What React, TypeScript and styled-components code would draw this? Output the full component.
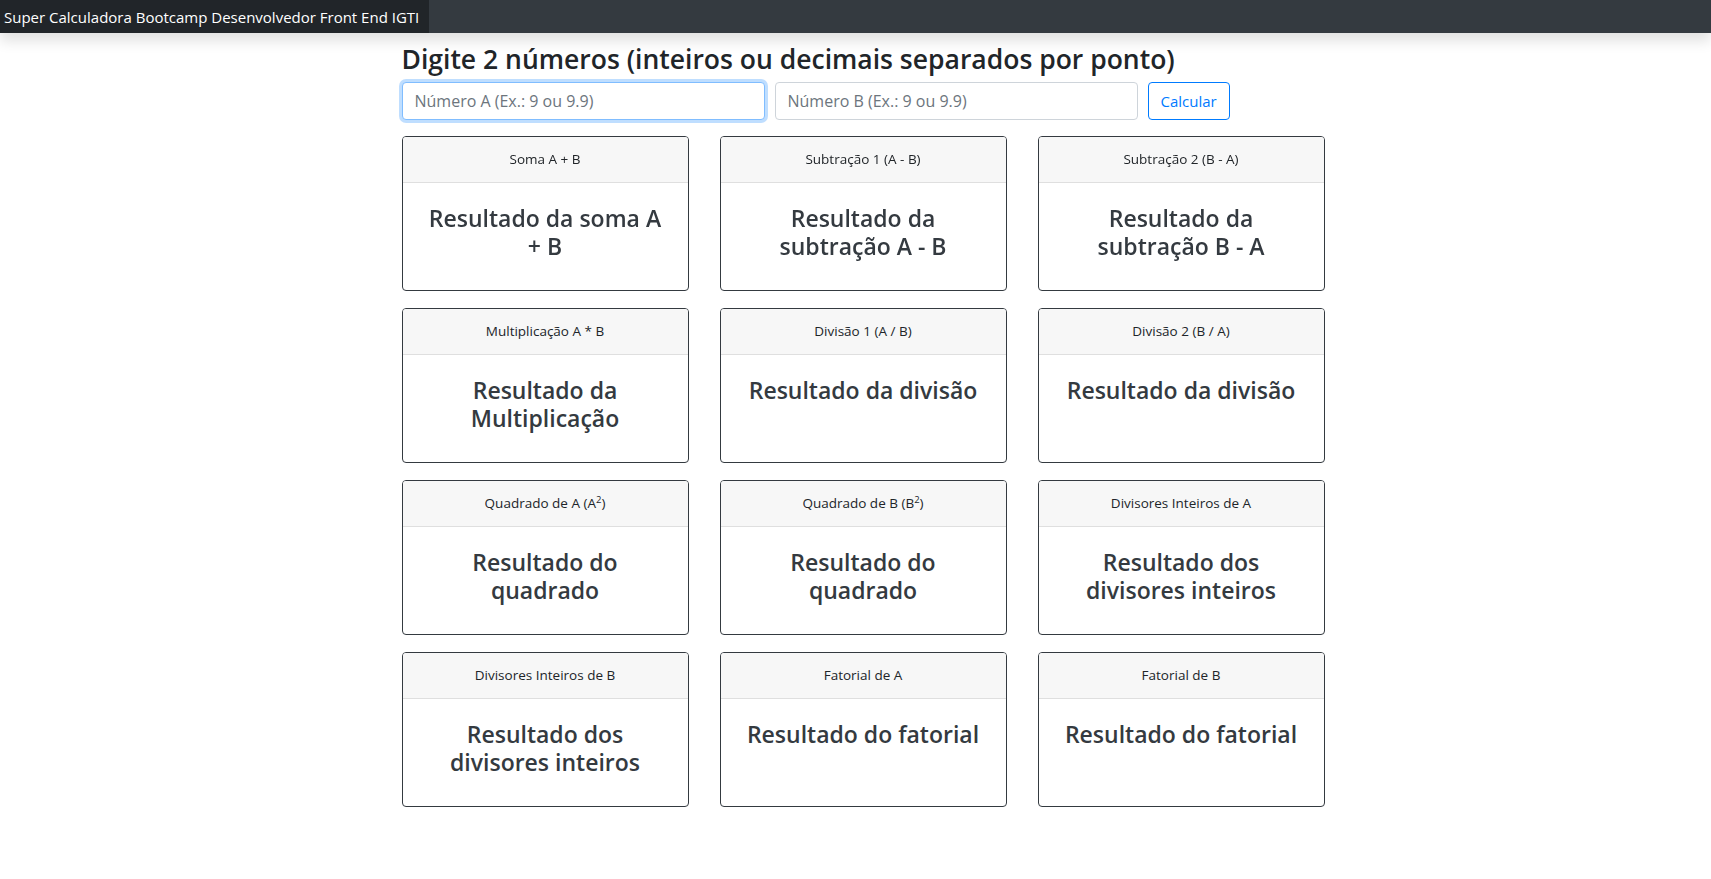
import React from "react";
import styled, { createGlobalStyle } from "styled-components";

const Global = createGlobalStyle`
  * { box-sizing: border-box; }
  body {
    margin: 0;
    background: #fff;
    color: #212529;
    font-family: "Open Sans", "Noto Sans", sans-serif;
  }
`;

const NavBar = styled.nav`
  height: 33px;
  background: #343a40;
  display: flex;
  align-items: stretch;
  box-shadow: 0 8px 14px rgba(0, 0, 0, 0.12);
`;

const Brand = styled.div`
  background: #212529;
  color: #fff;
  font-size: 15px;
  display: flex;
  align-items: center;
  padding: 0 10px 0 4px;
  white-space: nowrap;
`;

const Container = styled.main`
  width: 938px;
  margin: 0 auto;
  padding: 11px 0 24px 15px;
`;

const Title = styled.h3`
  margin: 0 0 6px;
  font-size: 26.5px;
  font-weight: 600;
  line-height: 1.2;
  color: #212529;
`;

const Form = styled.div`
  display: flex;
  align-items: center;
  gap: 10px;
  margin-bottom: 16px;
`;

const Input = styled.input`
  width: 363px;
  height: 38px;
  padding: 6px 12px;
  font-family: inherit;
  font-size: 16px;
  color: #495057;
  border: 1px solid #ced4da;
  border-radius: 4px;
  outline: none;
  &::placeholder { color: #6c757d; }
  &:focus {
    border-color: #80bdff;
    box-shadow: 0 0 0 3px rgba(0, 123, 255, 0.25);
  }
`;

const Button = styled.button`
  height: 38px;
  padding: 0 12px;
  font-family: inherit;
  font-size: 15px;
  color: #007bff;
  background: #fff;
  border: 1px solid #007bff;
  border-radius: 4px;
  cursor: pointer;
`;

const Grid = styled.div`
  display: grid;
  grid-template-columns: repeat(3, 287px);
  column-gap: 31px;
  row-gap: 17px;
`;

const Card = styled.section`
  height: 155px;
  border: 1px solid #343a40;
  border-radius: 4px;
  display: flex;
  flex-direction: column;
  overflow: hidden;
`;

const CardHeader = styled.header`
  background: #f7f7f7;
  border-bottom: 1px solid #dfdfdf;
  padding: 12px 16px;
  font-size: 13.5px;
  line-height: 21px;
  text-align: center;
  color: #212529;
  sup { font-size: 9.5px; line-height: 0; }
`;

const CardBody = styled.div`
  padding: 21px 20px 20px;
  text-align: center;
  font-size: 23px;
  font-weight: 600;
  line-height: 28px;
  color: #343a40;
`;

type Item = { title: React.ReactNode; body: string };

const items: Item[] = [
  { title: "Soma A + B", body: "Resultado da soma A + B" },
  { title: "Subtração 1 (A - B)", body: "Resultado da subtração A - B" },
  { title: "Subtração 2 (B - A)", body: "Resultado da subtração B - A" },
  { title: "Multiplicação A * B", body: "Resultado da Multiplicação" },
  { title: "Divisão 1 (A / B)", body: "Resultado da divisão" },
  { title: "Divisão 2 (B / A)", body: "Resultado da divisão" },
  { title: <>Quadrado de A (A<sup>2</sup>)</>, body: "Resultado do quadrado" },
  { title: <>Quadrado de B (B<sup>2</sup>)</>, body: "Resultado do quadrado" },
  { title: "Divisores Inteiros de A", body: "Resultado dos divisores inteiros" },
  { title: "Divisores Inteiros de B", body: "Resultado dos divisores inteiros" },
  { title: "Fatorial de A", body: "Resultado do fatorial" },
  { title: "Fatorial de B", body: "Resultado do fatorial" },
];

export default function App() {
  return (
    <>
      <Global />
      <NavBar>
        <Brand>Super Calculadora Bootcamp Desenvolvedor Front End IGTI</Brand>
      </NavBar>
      <Container>
        <Title>Digite 2 números (inteiros ou decimais separados por ponto)</Title>
        <Form>
          <Input autoFocus placeholder="Número A (Ex.: 9 ou 9.9)" />
          <Input placeholder="Número B (Ex.: 9 ou 9.9)" />
          <Button>Calcular</Button>
        </Form>
        <Grid>
          {items.map((it, i) => (
            <Card key={i}>
              <CardHeader>{it.title}</CardHeader>
              <CardBody>{it.body}</CardBody>
            </Card>
          ))}
        </Grid>
      </Container>
    </>
  );
}
